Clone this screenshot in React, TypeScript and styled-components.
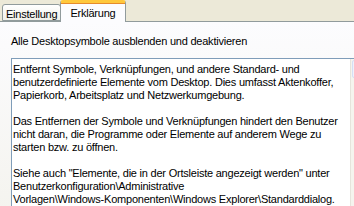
import React from "react";
import styled, { createGlobalStyle } from "styled-components";

const Global = createGlobalStyle`
  html, body { margin: 0; padding: 0; }
  body {
    width: 354px; height: 206px; overflow: hidden;
    background: #ece9d8;
    font-family: "Liberation Sans", Arial, sans-serif;
    font-size: 11px;
    letter-spacing: -0.22px;
    color: #000;
  }
`;

const Root = styled.div`
  width: 354px;
  height: 206px;
  display: flex;
  flex-direction: column;
  overflow: hidden;
`;

const TabBar = styled.div`
  display: flex;
  align-items: flex-end;
  height: 23px;
  padding-left: 2px;
  position: relative;
  z-index: 1;
`;

const Tab = styled.div<{ $active?: boolean }>`
  box-sizing: border-box;
  height: ${(p) => (p.$active ? 22 : 17)}px;
  margin-bottom: ${(p) => (p.$active ? -1 : 0)}px;
  padding: ${(p) => (p.$active ? "4px 9px 0 9px" : "3px 3px 0 3px")};
  border: 1px solid #919b9c;
  border-bottom: ${(p) => (p.$active ? "none" : "1px solid #919b9c")};
  border-top: ${(p) => (p.$active ? "3px solid #ffc83c" : "1px solid #919b9c")};
  border-radius: 3px 3px 0 0;
  background: ${(p) =>
    p.$active ? "#fcfcfe" : "linear-gradient(#ffffff, #f0f0ea)"};
  box-shadow: ${(p) => (p.$active ? "inset 0 1px 0 #e68b2c" : "none")};
  margin-left: ${(p) => (p.$active ? -1 : 0)}px;
  white-space: nowrap;
  line-height: 13px;
`;

const Panel = styled.div`
  flex: 1;
  border-top: 1px solid #919b9c;
  background: linear-gradient(#fcfcfe, #f4f3ee);
  padding: 13px 0 0 11px;
  display: flex;
  flex-direction: column;
`;

const Title = styled.div`
  line-height: 13px;
  height: 13px;
`;

const TextBox = styled.div`
  margin-top: 10px;
  margin-right: -20px;
  flex: 1;
  display: flex;
  border-top: 1px solid #7f9db9;
  border-left: 1px solid #7f9db9;
  background: #fff;
`;

const TextContent = styled.div`
  width: 337px;
  padding: 4px 0 0 1px;
  line-height: 13px;
`;

const Para = styled.p`
  margin: 0 0 13px 0;
  white-space: nowrap;
`;

const Scrollbar = styled.div`
  flex: 1;
  background: #f5f4ee;
  border-left: 1px solid #e6e4dc;
  display: flex;
  flex-direction: column;
`;

const ScrollButton = styled.div`
  height: 16px;
  margin: 1px 1px 0 1px;
  border: 1px solid #d6dff4;
  border-radius: 2px;
  background: #eef2fc;
`;

export default function App() {
  return (
    <Root>
      <Global />
      <TabBar>
        <Tab>Einstellung</Tab>
        <Tab $active>Erklärung</Tab>
      </TabBar>
      <Panel>
        <Title>Alle Desktopsymbole ausblenden und deaktivieren</Title>
        <TextBox>
          <TextContent>
            <Para>
              Entfernt Symbole, Verknüpfungen, und andere Standard- und
              <br />
              benutzerdefinierte Elemente vom Desktop. Dies umfasst Aktenkoffer,
              <br />
              Papierkorb, Arbeitsplatz und Netzwerkumgebung.
            </Para>
            <Para>
              Das Entfernen der Symbole und Verknüpfungen hindert den Benutzer
              <br />
              nicht daran, die Programme oder Elemente auf anderem Wege zu
              <br />
              starten bzw. zu öffnen.
            </Para>
            <Para>
              Siehe auch "Elemente, die in der Ortsleiste angezeigt werden" unter
              <br />
              Benutzerkonfiguration\Administrative
              <br />
              Vorlagen\Windows-Komponenten\Windows Explorer\Standarddialog.
            </Para>
          </TextContent>
          <Scrollbar>
            <ScrollButton />
          </Scrollbar>
        </TextBox>
      </Panel>
    </Root>
  );
}
